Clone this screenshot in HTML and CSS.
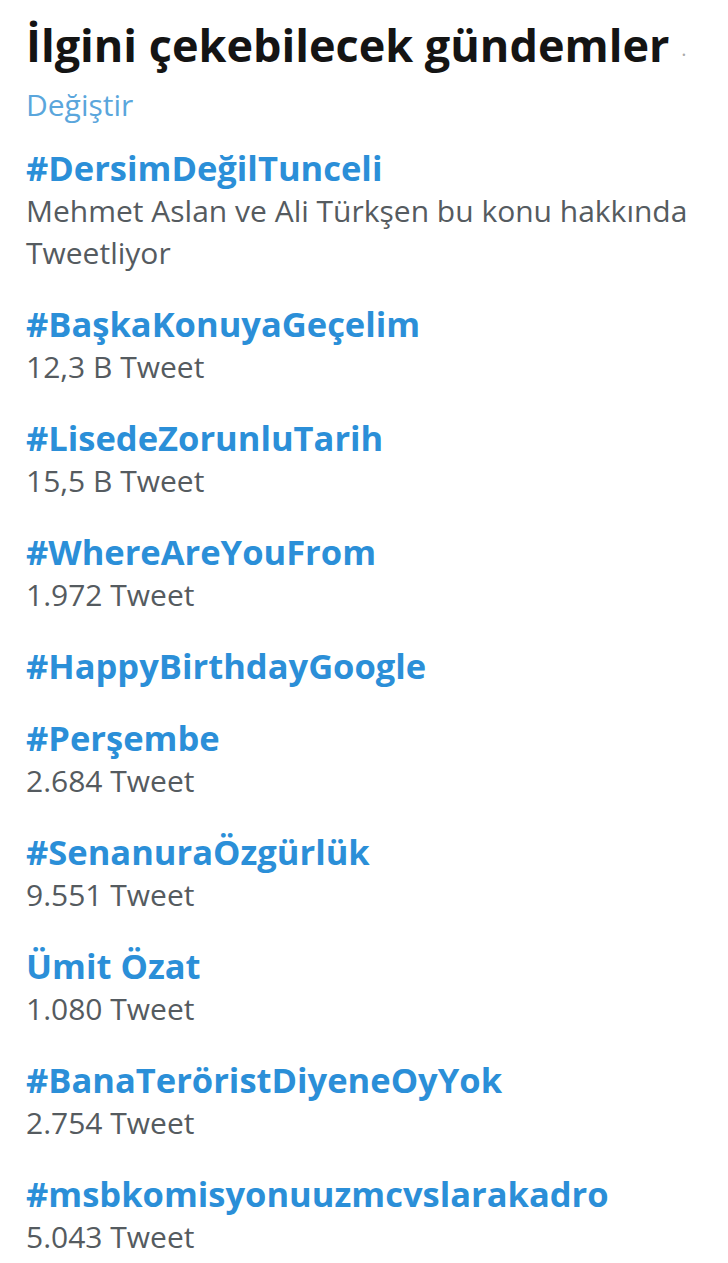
FILE: index.html
```html
<!DOCTYPE html>
<html lang="tr">
<head>
<meta charset="utf-8">
<link rel="stylesheet" href="styles.css">
</head>
<body>
<section class="panel">
  <header class="head">
    <h1 class="title">İlgini çekebilecek gündemler <span class="dot">·</span></h1>
    <a class="change">Değiştir</a>
  </header>
  <ul class="trends">
    <li class="trend">
      <a class="tag">#DersimDeğilTunceli</a>
      <p class="meta">Mehmet Aslan ve Ali Türkşen bu konu hakkında Tweetliyor</p>
    </li>
    <li class="trend">
      <a class="tag">#BaşkaKonuyaGeçelim</a>
      <p class="meta">12,3 B Tweet</p>
    </li>
    <li class="trend">
      <a class="tag">#LisedeZorunluTarih</a>
      <p class="meta">15,5 B Tweet</p>
    </li>
    <li class="trend">
      <a class="tag">#WhereAreYouFrom</a>
      <p class="meta">1.972 Tweet</p>
    </li>
    <li class="trend">
      <a class="tag">#HappyBirthdayGoogle</a>
    </li>
    <li class="trend">
      <a class="tag">#Perşembe</a>
      <p class="meta">2.684 Tweet</p>
    </li>
    <li class="trend">
      <a class="tag">#SenanuraÖzgürlük</a>
      <p class="meta">9.551 Tweet</p>
    </li>
    <li class="trend">
      <a class="tag">Ümit Özat</a>
      <p class="meta">1.080 Tweet</p>
    </li>
    <li class="trend">
      <a class="tag">#BanaTeröristDiyeneOyYok</a>
      <p class="meta">2.754 Tweet</p>
    </li>
    <li class="trend">
      <a class="tag">#msbkomisyonuuzmcvslarakadro</a>
      <p class="meta">5.043 Tweet</p>
    </li>
  </ul>
</section>
</body>
</html>
```
FILE: styles.css
```css
html, body {
  margin: 0;
  background: #ffffff;
}
body {
  font-family: "Open Sans", "Noto Sans", sans-serif;
}
.panel {
  padding: 14px 26px 0 26px;
}
.head {
  display: flex;
  flex-direction: column;
}
.title {
  margin: 0;
  font-size: 45px;
  line-height: 62px;
  font-weight: 700;
  color: #141414;
  white-space: nowrap;
}
.dot {
  font-size: 20px;
  color: #aaa;
  font-weight: 400;
}
.change {
  font-size: 30px;
  line-height: 38px;
  color: #5aa6dc;
}
.trends {
  list-style: none;
  margin: 0;
  padding: 22px 0 0 0;
  display: flex;
  flex-direction: column;
  gap: 28px;
}
.trend {
  display: flex;
  flex-direction: column;
}
.tag {
  font-size: 34.5px;
  line-height: 44px;
  font-weight: 700;
  color: #2b8fd8;
  white-space: nowrap;
}
.meta {
  margin: 0;
  font-size: 30px;
  line-height: 42px;
  color: #555b60;
}
```
